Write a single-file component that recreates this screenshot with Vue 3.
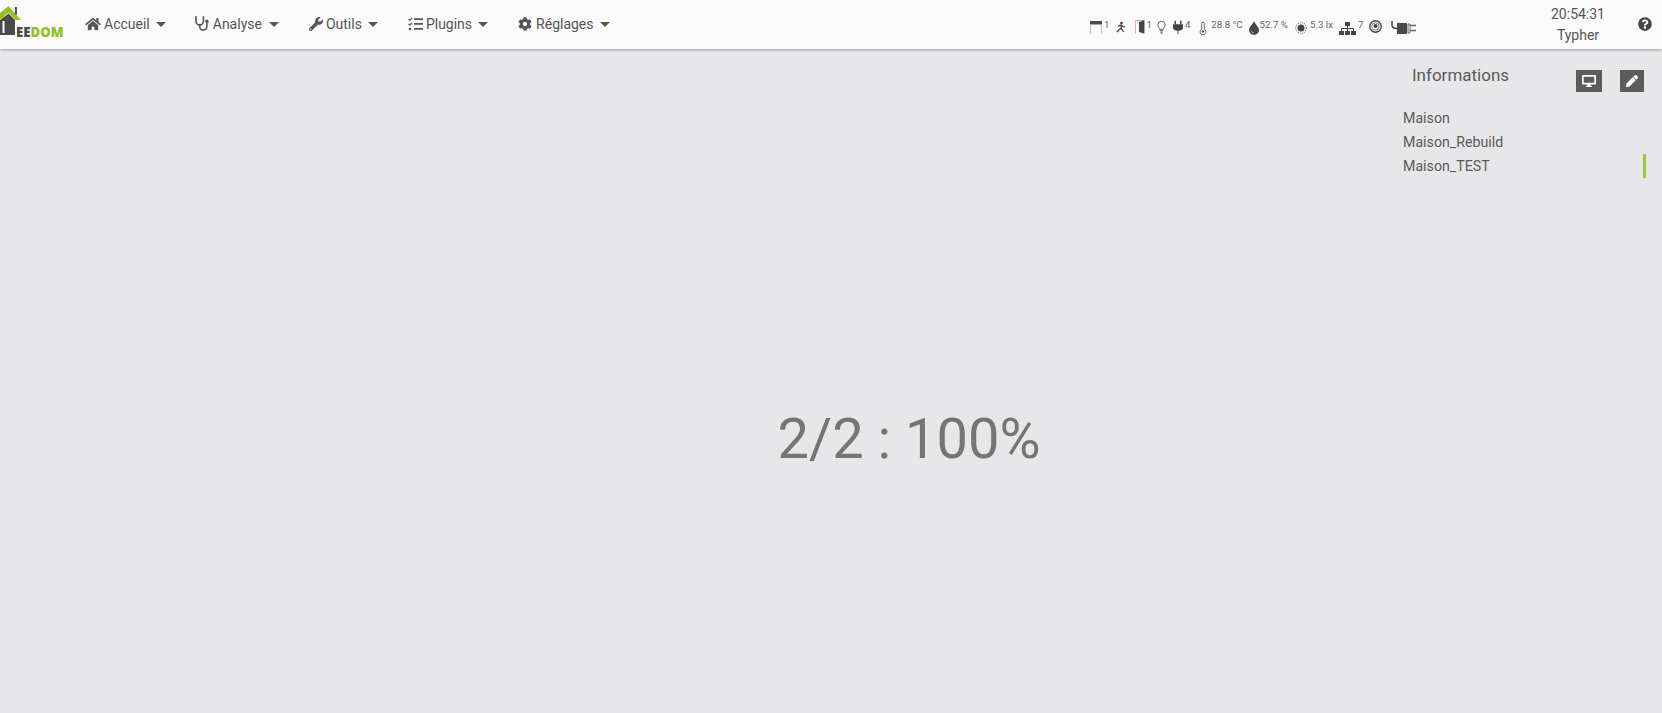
<script setup>
const menus = [
  { label: 'Accueil', icon: 'home' },
  { label: 'Analyse', icon: 'stetho' },
  { label: 'Outils', icon: 'wrench' },
  { label: 'Plugins', icon: 'tasks' },
  { label: 'Réglages', icon: 'cog' },
]
const objects = ['Maison', 'Maison_Rebuild', 'Maison_TEST']
</script>

<template>
  <div class="page">
    <header class="navbar">
      <div class="logo">
        <svg class="logo-house" width="24" height="36" viewBox="0 0 24 36">
          <path d="M0 13L8.5 6L21 20H15.5L8.5 12.5L1 19H0Z" fill="#94c11f" />
          <path d="M15 7H17V14.5H15Z" fill="#555" />
          <path d="M0 20L8.5 13.5L15 20V35H0Z" fill="#4a4a4a" />
          <path d="M2.5 21H4.5V33H2.5Z" fill="#fafafa" />
        </svg>
        <span class="logo-text">EE<b>DOM</b></span>
      </div>

      <nav class="menu">
        <div v-for="m in menus" :key="m.label" class="menu-item">
          <svg v-if="m.icon === 'home'" class="ico" width="16" height="14" viewBox="0 0 576 512"><path d="M280.37 148.26L96 300.11V464a16 16 0 0 0 16 16l112.06-.29a16 16 0 0 0 15.92-16V368a16 16 0 0 1 16-16h64a16 16 0 0 1 16 16v95.64a16 16 0 0 0 16 16.05L464 480a16 16 0 0 0 16-16V300L295.67 148.26a12.19 12.19 0 0 0-15.3 0zM571.6 251.47L488 182.56V44.05a12 12 0 0 0-12-12h-56a12 12 0 0 0-12 12v72.61L318.47 43a48 48 0 0 0-61 0L4.34 251.47a12 12 0 0 0-1.6 16.9l25.5 31A12 12 0 0 0 45.15 301l235.22-193.74a12.19 12.19 0 0 1 15.3 0L530.9 301a12 12 0 0 0 16.9-1.6l25.5-31a12 12 0 0 0-1.7-16.93z" /></svg>
          <svg v-else-if="m.icon === 'stetho'" class="ico" width="15" height="15" viewBox="0 0 15 15"><path d="M1 .8V5.2A3.7 3.7 0 0 0 8.4 5.2V.8M4.7 9V10.8A3.6 3.2 0 0 0 11.9 10.8V7" fill="none" stroke="currentColor" stroke-width="1.6" stroke-linecap="round" /><circle cx="11.9" cy="5.2" r="1.7" fill="currentColor" /></svg>
          <svg v-else-if="m.icon === 'wrench'" class="ico" width="14" height="14" viewBox="0 0 512 512"><path d="M507.73 109.1c-2.24-9.03-13.54-12.09-20.12-5.51l-74.36 74.36-67.88-11.31-11.31-67.88 74.36-74.36c6.62-6.62 3.43-17.9-5.66-20.16-47.38-11.74-99.55.91-136.58 37.93-39.64 39.64-50.55 97.1-34.05 147.2L18.74 402.76c-24.99 24.99-24.99 65.51 0 90.5 24.99 24.99 65.51 24.99 90.5 0l213.21-213.21c50.12 16.71 107.47 5.68 147.37-34.22 37.07-37.07 49.7-89.32 37.91-136.73zM64 472c-13.25 0-24-10.75-24-24 0-13.26 10.75-24 24-24s24 10.74 24 24c0 13.25-10.75 24-24 24z" /></svg>
          <svg v-else-if="m.icon === 'tasks'" class="ico" width="15" height="14" viewBox="0 0 15 14"><path d="M0.6 2.2L1.8 3.4L4 0.8M0.6 7L1.8 8.2L4 5.6" fill="none" stroke="currentColor" stroke-width="1.2" /><circle cx="2" cy="12" r="1.3" fill="currentColor" /><path d="M6 1.2H15V3H6ZM6 6H15V7.8H6ZM6 11H15V12.8H6Z" /></svg>
          <svg v-else class="ico" width="14" height="14" viewBox="0 0 512 512"><path d="M487.4 315.7l-42.6-24.6c4.3-23.2 4.3-47 0-70.2l42.6-24.6c4.9-2.8 7.1-8.6 5.5-14-11.1-35.6-30-67.8-54.7-94.6-3.8-4.1-10-5.1-14.8-2.3L380.8 110c-17.9-15.4-38.5-27.3-60.8-35.1V25.8c0-5.6-3.9-10.5-9.4-11.7-36.7-8.2-74.3-7.8-109.2 0-5.5 1.2-9.4 6.1-9.4 11.7V75c-22.2 7.9-42.8 19.8-60.8 35.1L88.7 85.5c-4.9-2.8-11-1.9-14.8 2.3-24.7 26.7-43.6 58.9-54.7 94.6-1.7 5.4.6 11.2 5.5 14L67.3 221c-4.3 23.2-4.3 47 0 70.2l-42.6 24.6c-4.9 2.8-7.1 8.6-5.5 14 11.1 35.6 30 67.8 54.7 94.6 3.8 4.1 10 5.1 14.8 2.3l42.6-24.6c17.9 15.4 38.5 27.3 60.8 35.1v49.2c0 5.6 3.9 10.5 9.4 11.7 36.7 8.2 74.3 7.8 109.2 0 5.5-1.2 9.4-6.1 9.4-11.7v-49.2c22.2-7.9 42.8-19.8 60.8-35.1l42.6 24.6c4.9 2.8 11 1.9 14.8-2.3 24.7-26.7 43.6-58.9 54.7-94.6 1.5-5.5-.7-11.3-5.6-14.1zM256 336c-44.1 0-80-35.9-80-80s35.9-80 80-80 80 35.9 80 80-35.9 80-80 80z" /></svg>
          <span>{{ m.label }}</span>
          <i class="caret"></i>
        </div>
      </nav>

      <div class="status">
        <span class="stat s1">
          <svg width="12" height="14" viewBox="0 0 12 14"><path d="M0 1H12V4.5H0Z" fill="#4a4a4a" /><path d="M.5 4V14" stroke="#e3b4ae" fill="none" /><path d="M11.5 4V14" stroke="#e6b9b0" fill="none" /></svg>
          <small>1</small>
        </span>
        <span class="stat s2">
          <svg width="10" height="12" viewBox="0 0 11 12"><circle cx="6" cy="1.6" r="1.5" fill="#444" /><path d="M5 3.5L2.5 5.5M5 3.5L8 5.5L10 6M5.5 4L6 8L8.5 11.5M5.5 7.5L3.5 9L1 11.5" fill="none" stroke="#444" stroke-width="1.4" /></svg>
        </span>
        <span class="stat s3">
          <svg width="10" height="14" viewBox="0 0 10 14"><path d="M.5 .5H9.5V13.5" fill="none" stroke="#aaa" /><path d="M.5 .5V13.5" stroke="#e3b4ae" /><path d="M4 2L9 .5V13.5L4 12Z" fill="#444" /></svg>
          <small>1</small>
        </span>
        <span class="stat s4">
          <svg width="9" height="15" viewBox="0 0 10 15"><path d="M3 9.5C3 8 1 7 1 4.5A4 3.9 0 0 1 9 4.5C9 7 7 8 7 9.5Z" fill="none" stroke="#555" /><path d="M3.2 11H6.8M3.5 12.6H6.5M4.3 14.2H5.7" stroke="#555" fill="none" /></svg>
        </span>
        <span class="stat s5">
          <svg width="10" height="15" viewBox="0 0 11 15"><path d="M2.5 0V4M8.5 0V4" stroke="#444" stroke-width="1.6" /><path d="M0 4H11V7.5C11 10 8 11 6 11V15H5V11C3 11 0 10 0 7.5Z" fill="#444" /></svg>
          <small>4</small>
        </span>
        <span class="stat s6">
          <svg width="8" height="14" viewBox="0 0 9 14"><path d="M3 8.5V2A1.5 1.5 0 0 1 6 2V8.5A3.2 3.2 0 1 1 3 8.5Z" fill="none" stroke="#555" /><circle cx="4.5" cy="10.8" r="1.4" fill="#555" /></svg>
          <small>28.8 °C</small>
        </span>
        <span class="stat s7">
          <svg width="10" height="14" viewBox="0 0 10 14"><path d="M5 0C6 3 10 6 10 9.2A5 4.8 0 0 1 0 9.2C0 6 4 3 5 0Z" fill="#444" /><path d="M2.2 9.5A2.8 2.8 0 0 0 5 12" fill="none" stroke="#bbb" stroke-width=".8" /></svg>
          <small>52.7 %</small>
        </span>
        <span class="stat s8">
          <svg width="12" height="12" viewBox="0 0 12 12"><circle cx="6" cy="6" r="3.5" fill="#444" /><circle cx="6" cy="6" r="5.3" fill="none" stroke="#777" stroke-width="1.1" stroke-dasharray="1 1.1" /></svg>
          <small>5.3 lx</small>
        </span>
        <span class="stat s9">
          <svg width="17" height="13" viewBox="0 0 17 13"><path d="M6 0H11V4H6ZM0 9H5V13H0ZM6 9H11V13H6ZM12 9H17V13H12Z" fill="#444" /><path d="M8.5 4V9M2.5 9V6.5H14.5V9" fill="none" stroke="#444" /></svg>
          <small>7</small>
        </span>
        <span class="stat s10">
          <svg width="13" height="13" viewBox="0 0 14 14"><circle cx="7" cy="7" r="6.2" fill="none" stroke="#444" stroke-width="1.4" /><circle cx="7" cy="7" r="4" fill="none" stroke="#777" /><circle cx="7" cy="6.5" r="2.2" fill="#444" /></svg>
        </span>
        <span class="stat s11">
          <svg width="25" height="13" viewBox="0 0 25 13"><path d="M1 0V4C1 6.5 2.5 7.5 6 7.5" fill="none" stroke="#444" stroke-width="1.5" /><path d="M6 2H16V13H6Z" fill="#4a4a4a" /><path d="M17 3H19V12H17Z" fill="none" stroke="#666" /><path d="M19 4.5H25M19 9.5H25" stroke="#666" stroke-width="1.3" /></svg>
        </span>
      </div>

      <div class="clock">
        <div>20:54:31</div>
        <div class="user">Typher</div>
      </div>
      <svg class="help" width="14" height="14" viewBox="0 0 512 512"><path d="M504 256c0 136.997-111.043 248-248 248S8 392.997 8 256C8 119.083 119.043 8 256 8s248 111.083 248 248zM262.655 90c-54.497 0-89.255 22.957-116.549 63.758-3.536 5.286-2.353 12.415 2.715 16.258l34.699 26.31c5.205 3.947 12.621 3.008 16.665-2.122 17.864-22.658 30.113-35.797 57.303-35.797 20.429 0 45.698 13.148 45.698 32.958 0 14.976-12.363 22.667-32.534 33.976C247.128 238.528 216 254.941 216 296v4c0 6.627 5.373 12 12 12h56c6.627 0 12-5.373 12-12v-1.333c0-28.462 83.186-29.647 83.186-106.667 0-58.002-60.165-102-116.531-102zM256 338c-25.365 0-46 20.635-46 46 0 25.364 20.635 46 46 46s46-20.636 46-46c0-25.365-20.635-46-46-46z" /></svg>
    </header>

    <div class="content">
      <main class="main">
        <div class="progress">2/2 : 100%</div>
      </main>
      <aside class="side">
        <div class="side-head">
          <span class="side-title">Informations</span>
          <button class="btn b1">
            <svg width="14" height="12" viewBox="0 0 14 12"><path d="M0 1A1 1 0 0 1 1 0H13A1 1 0 0 1 14 1V8.5A1 1 0 0 1 13 9.5H1A1 1 0 0 1 0 8.5ZM1.7 1.7V7.8H12.3V1.7ZM5.5 9.5H8.5V10.8H10V12H4V10.8H5.5Z" fill="#fff" fill-rule="evenodd" /></svg>
          </button>
          <button class="btn b2">
            <svg width="12" height="12" viewBox="0 0 512 512"><path d="M497.9 142.1l-46.1 46.1c-4.7 4.7-12.3 4.7-17 0l-111-111c-4.7-4.7-4.7-12.3 0-17l46.1-46.1c18.7-18.7 49.1-18.7 67.9 0l60.1 60.1c18.8 18.7 18.8 49.1 0 67.9zM284.2 99.8L21.6 362.4.4 483.9c-2.9 16.4 11.4 30.6 27.8 27.8l121.5-21.3 262.6-262.6c4.7-4.7 4.7-12.3 0-17l-111-111c-4.8-4.7-12.4-4.7-17.1 0z" fill="#fff" /></svg>
          </button>
        </div>
        <ul class="list">
          <li v-for="(o, i) in objects" :key="o" :class="{ active: i === 2 }">{{ o }}</li>
        </ul>
      </aside>
    </div>
  </div>
</template>

<style>
html, body { margin: 0; background: #e7e7e9; }
</style>

<style scoped>
.page {
  height: 713px;
  overflow: hidden;
  display: flex;
  flex-direction: column;
  background: #e7e7e9;
  font-family: Roboto, "Liberation Sans", sans-serif;
  font-size: 14px;
  color: #555;
}
.navbar {
  height: 49px;
  flex: none;
  display: flex;
  align-items: center;
  background: #fafafa;
  box-shadow: 0 1px 3px rgba(0, 0, 0, 0.3);
  position: relative;
}
.logo {
  width: 85px;
  height: 49px;
  flex: none;
  position: relative;
  overflow: hidden;
}
.logo-house {
  position: absolute;
  left: 0;
  top: 0;
}
.logo-text {
  position: absolute;
  left: 16px;
  top: 23px;
  font-family: "Open Sans", sans-serif;
  font-weight: 800;
  font-size: 13.2px;
  line-height: 18px;
  color: #4a4a4a;
}
.logo-text b { color: #94c11f; font-weight: 800; }
.menu {
  display: flex;
  align-items: center;
  margin-top: -2px;
}
.menu-item {
  display: flex;
  align-items: center;
  margin-right: 30px;
  height: 20px;
  white-space: nowrap;
}
.menu-item:first-child { margin-right: 29px; }
.menu-item span { margin-left: 3px; }
.menu-item:last-child span { margin-left: 4px; }
.ico { fill: #555; color: #555; flex: none; }
.caret {
  width: 0;
  height: 0;
  margin-left: 6px;
  margin-top: 2px;
  border-left: 5px solid transparent;
  border-right: 5px solid transparent;
  border-top: 5px solid #555;
}
.menu-item:nth-child(2) .caret { margin-left: 7px; }
.status {
  position: absolute;
  left: 1090px;
  top: 20px;
  display: flex;
  align-items: flex-start;
  height: 16px;
}
.stat {
  display: flex;
  align-items: flex-start;
}
.stat small {
  font-size: 9.7px;
  line-height: 10px;
  color: #666;
  white-space: nowrap;
}
.stat svg { display: block; flex: none; }
.s1 { margin-right: 7px; }
.s1 small { margin-left: 2px; }
.s2 { margin-right: 9px; margin-top: 1px; }
.s3 { margin-right: 5px; }
.s3 small { margin-left: 1px; }
.s4 { margin-right: 7px; }
.s5 { margin-right: 9px; }
.s5 small { margin-left: 2px; }
.s6 { margin-right: 6px; }
.s6 svg { margin-top: 1px; }
.s6 small { margin-left: 4px; }
.s7 { margin-right: 7px; }
.s7 svg { margin-top: 1px; }
.s7 small { margin-left: 1px; }
.s8 { margin-right: 6px; }
.s8 svg { margin-top: 2px; }
.s8 small { margin-left: 3px; }
.s9 { margin-right: 6px; }
.s9 svg { margin-top: 2px; }
.s9 small { margin-left: 2px; }
.s10 { margin-right: 9px; }
.s11 svg { margin-top: 1px; }
.clock {
  position: absolute;
  left: 1528px;
  width: 100px;
  top: 4px;
  text-align: center;
  line-height: 20px;
}
.clock .user { margin-top: 1px; }
.help {
  position: absolute;
  left: 1638px;
  top: 17px;
  fill: #444;
}
.content {
  flex: 1;
  display: flex;
  min-height: 0;
}
.main {
  flex: 1;
  display: flex;
  align-items: center;
  justify-content: center;
  padding-left: 415px;
  padding-top: 116px;
}
.progress {
  font-size: 56px;
  line-height: 70px;
  color: #757575;
  white-space: nowrap;
}
.side {
  width: 259px;
  flex: none;
  padding-top: 16px;
  box-sizing: border-box;
}
.side-head {
  display: flex;
  align-items: flex-start;
  padding-left: 9px;
  height: 41px;
}
.side-title {
  font-size: 17px;
  line-height: 20px;
  color: #5a5a5a;
  width: 164px;
}
.btn {
  border: 0;
  padding: 0;
  background: #5c5c5c;
  display: flex;
  align-items: center;
  justify-content: center;
  height: 22px;
}
.b1 { width: 26px; margin-top: 5px; margin-right: 18px; }
.b2 { width: 24px; margin-top: 5px; }
.list {
  list-style: none;
  margin: 0;
  padding: 0;
  width: 243px;
}
.list li {
  height: 24px;
  line-height: 24px;
  font-size: 14.2px;
  color: #5a5a5a;
  box-sizing: border-box;
}
.list li.active { border-right: 3px solid #a4c639; }
</style>
